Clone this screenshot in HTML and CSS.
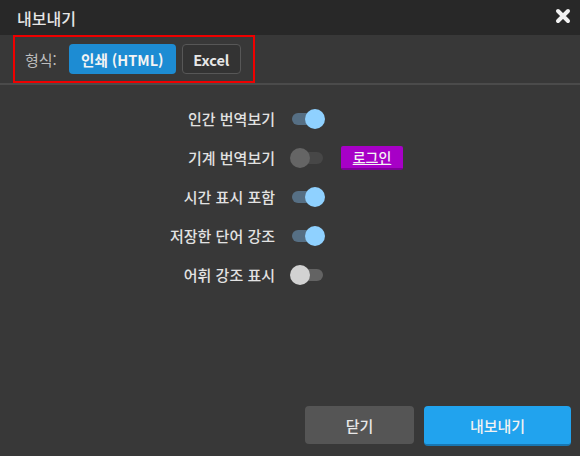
FILE: index.html
```html
<!DOCTYPE html>
<html lang="ko">
<head>
<meta charset="utf-8">
<link rel="stylesheet" href="styles.css">
</head>
<body>
<div class="dialog">
  <div class="header">
    <span class="title">내보내기</span>
    <svg class="close" width="16" height="16" viewBox="0 0 16 16"><path d="M3 3L13 13M13 3L3 13" stroke="#f2f2f2" stroke-width="4" stroke-linecap="round"/></svg>
  </div>
  <div class="toolbar">
    <div class="format-box">
      <span class="format-label">형식:</span>
      <button class="btn-primary">인쇄 (HTML)</button>
      <button class="btn-outline">Excel</button>
    </div>
  </div>
  <div class="options">
    <div class="row"><span class="label">인간 번역보기</span><span class="toggle on"><span class="track"></span><span class="knob"></span></span><span></span></div>
    <div class="row"><span class="label">기계 번역보기</span><span class="toggle off"><span class="track"></span><span class="knob"></span></span><span class="login">로그인</span></div>
    <div class="row"><span class="label">시간 표시 포함</span><span class="toggle on"><span class="track"></span><span class="knob"></span></span><span></span></div>
    <div class="row"><span class="label">저장한 단어 강조</span><span class="toggle on"><span class="track"></span><span class="knob"></span></span><span></span></div>
    <div class="row"><span class="label">어휘 강조 표시</span><span class="toggle off light"><span class="track"></span><span class="knob"></span></span><span></span></div>
  </div>
  <div class="footer">
    <button class="btn-close">닫기</button>
    <button class="btn-export">내보내기</button>
  </div>
</div>
</body>
</html>
```

FILE: styles.css
```css
* { box-sizing: border-box; }
html, body { margin: 0; padding: 0; }
body {
  width: 580px;
  height: 456px;
  background: #383838;
  font-family: "Noto Sans CJK KR", "Noto Sans", sans-serif;
  overflow: hidden;
}
.dialog {
  width: 580px;
  height: 456px;
  display: flex;
  flex-direction: column;
  background: #383838;
}
.header {
  height: 35px;
  background: #282828;
  display: flex;
  align-items: center;
  justify-content: space-between;
  padding: 0 9px 0 17px;
}
.title {
  color: #e6e6e6;
  font-size: 16px;
  font-weight: 500;
}
.close { display: block; margin-top: -3px; }
.toolbar {
  height: 50px;
  border-bottom: 2px solid #4b4b4b;
  padding-left: 13px;
  display: flex;
}
.format-box {
  width: 242px;
  height: 48px;
  border: 2px solid #ee0000;
  display: flex;
  align-items: center;
  padding-left: 10px;
}
.format-label {
  color: #bdbdbd;
  font-size: 15px;
  margin-right: 12px;
}
.btn-primary, .btn-outline, .btn-close, .btn-export {
  font-family: "Noto Sans CJK KR", "Noto Sans", sans-serif;
  cursor: pointer;
}
.btn-primary {
  height: 30px;
  width: 107px;
  border: none;
  border-radius: 4px;
  background: #1d8cd3;
  color: #f4f4f4;
  font-size: 14.5px;
  font-weight: 700;
  padding: 0;
  margin-right: 6px;
}
.btn-outline {
  height: 30px;
  width: 59px;
  border: 1px solid #575757;
  border-radius: 4px;
  background: #333333;
  color: #e6e6e6;
  font-size: 14.5px;
  font-weight: 700;
  padding: 0;
}
.options {
  padding-top: 14px;
  display: flex;
  flex-direction: column;
}
.row {
  height: 39px;
  display: grid;
  grid-template-columns: 275px 35px auto;
  column-gap: 15px;
  align-items: center;
}
.label {
  text-align: right;
  color: #e2e2e2;
  font-size: 15px;
  font-weight: 500;
}
.toggle {
  position: relative;
  width: 35px;
  height: 20px;
  display: block;
}
.track {
  position: absolute;
  left: 2px;
  right: 2px;
  top: 4px;
  height: 12px;
  border-radius: 6px;
}
.knob {
  position: absolute;
  top: 0;
  width: 20px;
  height: 20px;
  border-radius: 50%;
}
.toggle.on .track { background: #566f84; }
.toggle.on .knob { right: 0; background: #8fd1ff; }
.toggle.off .track { background: #474747; }
.toggle.off .knob { left: 0; background: #656565; }
.toggle.off.light .track { background: #636363; }
.toggle.off.light .knob { background: #d2d2d2; }
.login {
  justify-self: start;
  margin-left: 1px;
  width: 62px;
  height: 24px;
  background: #a700c7;
  border-bottom: 2px solid #7e0097;
  border-radius: 2px;
  color: #f4f4f4;
  font-size: 14px;
  font-weight: 500;
  text-decoration: underline;
  display: flex;
  align-items: center;
  justify-content: center;
}
.footer {
  margin-top: auto;
  display: flex;
  justify-content: flex-end;
  align-items: flex-start;
  gap: 10px;
  padding: 0 9px 10px 0;
}
.btn-close {
  width: 109px;
  height: 38px;
  border: none;
  border-radius: 4px;
  background: #555555;
  color: #e8e8e8;
  font-size: 15px;
  font-weight: 500;
}
.btn-export {
  width: 147px;
  height: 40px;
  border: none;
  border-bottom: 2px solid #1877b3;
  border-radius: 4px;
  background: #21a3ee;
  color: #f2f2f2;
  font-size: 15px;
  font-weight: 500;
}
```
